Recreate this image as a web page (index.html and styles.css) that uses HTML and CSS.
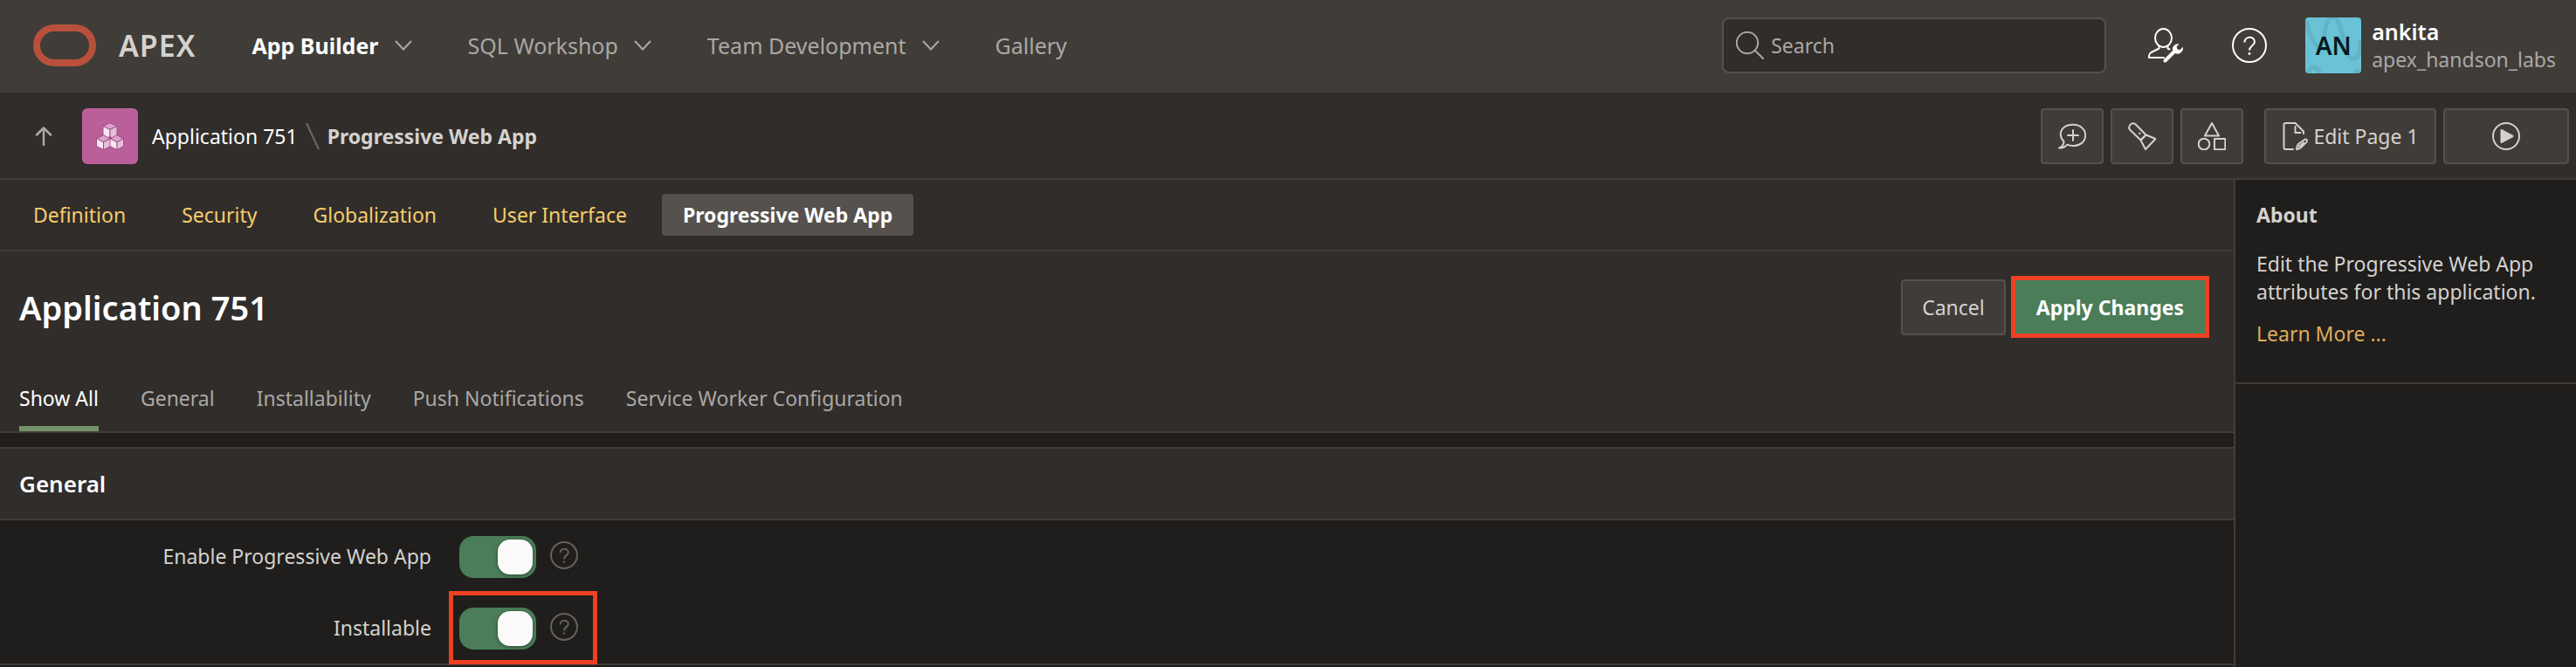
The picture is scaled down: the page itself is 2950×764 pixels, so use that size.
FILE: index.html
```html
<!DOCTYPE html>
<html lang="en">
<head>
<meta charset="utf-8">
<title>Application 751 - Progressive Web App</title>
<link rel="stylesheet" href="styles.css">
</head>
<body>
<header class="topbar">
  <a class="brand" href="#" aria-label="APEX home">
    <svg class="brand-mark" width="72" height="48" viewBox="0 0 72 48" aria-hidden="true"><rect x="4" y="4" width="64" height="40" rx="20" fill="none" stroke="#b9503c" stroke-width="8"/></svg>
    <span class="brand-name">APEX</span>
  </a>
  <nav class="mainnav" aria-label="Main">
    <a class="mainnav-link is-current" href="#">App Builder <svg class="chevron" viewBox="0 0 20 12" aria-hidden="true"><path d="M1 1l9 9.500 9-9.500"/></svg></a>
    <a class="mainnav-link" href="#">SQL Workshop <svg class="chevron" viewBox="0 0 20 12" aria-hidden="true"><path d="M1 1l9 9.500 9-9.500"/></svg></a>
    <a class="mainnav-link" href="#">Team Development <svg class="chevron" viewBox="0 0 20 12" aria-hidden="true"><path d="M1 1l9 9.500 9-9.500"/></svg></a>
    <a class="mainnav-link" href="#">Gallery</a>
  </nav>
  <label class="search">
    <svg class="search-icon" width="32" height="32" viewBox="0 0 32 32" aria-hidden="true"><circle cx="13" cy="13" r="12.200"/><path d="M22 22l9.500 9.500"/></svg>
    <input class="search-input" type="search" placeholder="Search" aria-label="Search">
  </label>
  <button class="icon-button admin" type="button" aria-label="Administration">
    <svg width="40" height="40" viewBox="0 0 40 40" fill="none" stroke="#fff" stroke-width="2" stroke-linejoin="round" stroke-linecap="round" aria-hidden="true"><ellipse cx="17.500" cy="11.500" rx="9.500" ry="10.500"/><path d="M12.500 20.500v3L3.500 28C1.800 29 1 30.300 1 32v2h17M22.500 20.500v3l2 1"/><path d="M19.500 37.500L31 26" stroke-width="4"/><path d="M34.500 18.500c-4 .3-7 3-6 7 .8 4 6.500 5 9.200 2.200 1.500-1.600 2-3.200 1.800-5.200l-3 3-3.300-.7-.8-3z" fill="#fff" stroke-width=".8"/></svg>
  </button>
  <button class="icon-button help" type="button" aria-label="Help">
    <svg width="40" height="40" viewBox="0 0 40 40" fill="none" stroke="#fff" stroke-width="2" aria-hidden="true"><circle cx="20" cy="20" r="19"/><path d="M14.500 16.500c0-7.500 11.500-7.500 11.500-.5 0 4-6 4.500-6 9.500"/><circle cx="20" cy="29.500" r="1.400" fill="#fff" stroke="none"/></svg>
  </button>
  <a class="account" href="#">
    <span class="avatar">
      <svg class="avatar-art" viewBox="0 0 64 64" aria-hidden="true"><path d="M1 4c5 18 6 22 15 32 8-4 4-36 16-37 13 4 9 46 22 48 8 0 9-8 9-21M4 63c2-8 8-9 13 1M56 63q3 0 4-4"/></svg>
      <span class="avatar-initials">AN</span>
    </span>
    <span class="account-text"><strong class="account-user">ankita</strong><span class="account-space">apex_handson_labs</span></span>
  </a>
</header>

<div class="crumbbar">
  <a class="up" href="#" aria-label="Up"><svg width="20" height="22" viewBox="0 0 20 22" fill="none" stroke="#aaa8a5" stroke-width="2.500" stroke-linecap="round" stroke-linejoin="round" aria-hidden="true"><path d="M10 21V2M2 9.500L10 1.500l8 8"/></svg></a>
  <span class="app-tile">
    <svg width="32" height="32" viewBox="0 0 32 32" stroke="#8f3f78" stroke-width=".8" stroke-linejoin="round" aria-hidden="true">
      <path d="M8 4.500L16 .8l8 3.700-8 4z" fill="#dda3cb"/><path d="M8 4.500l8 4v8l-8 4z" fill="#f8e6f2"/><path d="M24 4.500l-8 4v8l8 4z" fill="#e8bedb"/>
      <path d="M.5 18.800l8-4 8 4-8 4z" fill="#dda3cb"/><path d="M.5 18.800l8 4v8.700l-8-4z" fill="#f8e6f2"/><path d="M16.500 18.800l-8 4v8.700l8-4z" fill="#e8bedb"/>
      <path d="M16 18.800l8-4 7.500 4-7.500 4z" fill="#dda3cb"/><path d="M16 18.800l8 4v8.700l-8-4z" fill="#f8e6f2"/><path d="M31.500 18.800l-7.500 4v8.700l7.500-4z" fill="#e8bedb"/>
    </svg>
  </span>
  <nav class="crumbs" aria-label="Breadcrumb">
    <a class="crumb" href="#">Application 751</a>
    <svg class="crumb-slash" width="16" height="32" viewBox="0 0 16 32" aria-hidden="true"><path d="M1 1l14 30"/></svg>
    <span class="crumb is-current">Progressive Web App</span>
  </nav>
  <div class="tools">
    <button class="tool" type="button" aria-label="Feedback"><svg class="glyph" viewBox="0 0 32 32" aria-hidden="true"><path d="M1 29.500c3.500-1.500 5.500-4 5.500-7.500C4 19.500 2.800 17 2.800 14 2.800 7 8.800 2.800 17 2.800S31.200 8 31.200 15 25.500 27 17 27c-2.500 0-4.800-.4-6.500-1.300C8.500 28 5 29.800 1 29.500z"/><path d="M17 9v12M11 15h12"/></svg></button>
    <button class="tool" type="button" aria-label="Find"><svg class="glyph" viewBox="0 0 32 32" aria-hidden="true"><path d="M2 8.500C-.5 5 4-1 8.500 2.200L20.500 14.500 14.500 20.500z"/><path d="M20.500 14.500l11 4.500L20 31l-5.500-10.500z"/><path d="M13 12.500l.6.600"/></svg></button>
    <button class="tool" type="button" aria-label="Shared components"><svg class="glyph" viewBox="0 0 32 32" aria-hidden="true"><path d="M16 1l8 14.500H8z"/><circle cx="7" cy="25" r="6.300"/><rect x="19" y="19" width="12.300" height="12.300"/></svg></button>
    <button class="tool tool-edit" type="button"><svg class="glyph" viewBox="0 0 32 32" aria-hidden="true"><path d="M13 31H4.500q-2 0-2-2V3q0-2 2-2h11L25 10.500V13M15.500 5v7h6M17 31c.3-3 .8-4.800 2.300-6.300L26 20c2-1.500 4 .8 2.500 2.600L22 29c-1.500 1.300-3 2-5 2zM20 27.800l5-4.300"/></svg>Edit Page 1</button>
    <button class="tool tool-run" type="button" aria-label="Run page"><svg class="glyph" viewBox="0 0 32 32" aria-hidden="true"><circle cx="16" cy="16" r="15"/><path d="M10.500 9l13 7-13 7z" fill="#d4d2cf"/></svg></button>
  </div>
</div>

<div class="workspace">
  <main class="main">
    <nav class="subnav" aria-label="Application attributes">
      <a class="subnav-link" href="#">Definition</a>
      <a class="subnav-link" href="#">Security</a>
      <a class="subnav-link" href="#">Globalization</a>
      <a class="subnav-link" href="#">User Interface</a>
      <a class="subnav-link is-current" href="#" aria-current="page">Progressive Web App</a>
    </nav>
    <section class="pagehead">
      <div class="titlebar">
        <h1 class="title">Application 751</h1>
        <button class="button" type="button">Cancel</button>
        <button class="button button-hot" type="button">Apply Changes</button>
      </div>
      <nav class="tabs" aria-label="Sections">
        <a class="tab is-current" href="#">Show All</a>
        <a class="tab" href="#">General</a>
        <a class="tab" href="#">Installability</a>
        <a class="tab" href="#">Push Notifications</a>
        <a class="tab" href="#">Service Worker Configuration</a>
      </nav>
    </section>
    <section class="region">
      <h2 class="region-title">General</h2>
      <div class="field">
        <label class="field-label" for="enable">Enable Progressive Web App</label>
        <div class="field-control">
          <input class="switch" id="enable" type="checkbox" role="switch" checked>
          <button class="field-help" type="button" aria-label="Help for Enable Progressive Web App"><svg width="32" height="32" viewBox="0 0 40 40" fill="none" stroke="#65625f" stroke-width="2.500" aria-hidden="true"><circle cx="20" cy="20" r="18.700"/><path d="M14.500 16.500c0-7.500 11.500-7.500 11.500-.5 0 4-6 4.500-6 9.500"/><path d="M20 28v3"/></svg></button>
        </div>
      </div>
      <div class="field">
        <label class="field-label" for="installable">Installable</label>
        <div class="field-control is-marked">
          <input class="switch" id="installable" type="checkbox" role="switch" checked>
          <button class="field-help" type="button" aria-label="Help for Installable"><svg width="32" height="32" viewBox="0 0 40 40" fill="none" stroke="#65625f" stroke-width="2.500" aria-hidden="true"><circle cx="20" cy="20" r="18.700"/><path d="M14.500 16.500c0-7.500 11.500-7.500 11.500-.5 0 4-6 4.500-6 9.500"/><path d="M20 28v3"/></svg></button>
        </div>
      </div>
    </section>
  </main>
  <aside class="side">
    <section class="about">
      <h2 class="about-title">About</h2>
      <p class="about-text">Edit the Progressive Web App attributes for this application.</p>
      <a class="about-link" href="#">Learn More ...</a>
    </section>
  </aside>
</div>
</body>
</html>
```
FILE: styles.css
```css
* { box-sizing: border-box; }
:root {
  --bar: #403c38;
  --panel: #312d2a;
  --page: #201e1c;
  --line: #403c38;
  --edge: #56514d;
  --soft: #aaa8a5;
  --text: #d4d2cf;
  --green: #4a7d58;
  --mark: #ee4023;
}
body {
  margin: 0;
  min-height: 100vh;
  display: flex;
  flex-direction: column;
  background: var(--page);
  color: var(--text);
  font: 23px/32px "Noto Sans", "Open Sans", sans-serif;
}
a { color: inherit; text-decoration: none; }
button { font: inherit; color: inherit; cursor: pointer; }
h1, h2, p { margin: 0; }
svg { display: block; flex: none; }

.topbar {
  display: flex;
  align-items: center;
  padding: 20px 23px 22px 38px;
  background: var(--bar);
}
.brand { display: flex; align-items: center; gap: 26px; }
.brand-name { font-size: 34px; font-weight: 600; letter-spacing: 1px; }
.mainnav { display: flex; gap: 64px; margin-left: 64px; color: var(--soft); font-size: 25px; }
.mainnav-link { display: flex; align-items: center; gap: 18px; white-space: nowrap; }
.mainnav-link.is-current { color: #fff; font-weight: 700; }
.chevron { width: 20px; height: 12px; fill: none; stroke: var(--soft); stroke-width: 2; }
.search {
  display: flex;
  align-items: center;
  gap: 8px;
  width: 440px;
  height: 64px;
  margin-left: auto;
  padding: 0 14px;
  border: 2px solid var(--edge);
  border-radius: 8px;
  background: var(--panel);
}
.search-icon { fill: none; stroke: var(--soft); stroke-width: 2; stroke-linecap: round; }
.search-input {
  flex: 1;
  min-width: 0;
  padding: 0;
  border: 0;
  outline: 0;
  background: none;
  color: #fff;
  font: inherit;
}
.search-input::placeholder { color: var(--soft); opacity: 1; }
.icon-button { padding: 0; border: 0; background: none; }
.admin { margin-left: 48px; }
.help { margin-left: 56px; }
.account { display: flex; align-items: center; gap: 12px; margin-left: 44px; }
.avatar {
  position: relative;
  display: grid;
  place-items: center;
  width: 64px;
  height: 64px;
  border-radius: 4px;
  background: #6ac2d6;
  color: #06191d;
  font-size: 28px;
  font-weight: 600;
  overflow: hidden;
}
.avatar-art { position: absolute; inset: 0; fill: none; stroke: #60b4c7; stroke-width: 5; }
.avatar-initials { position: relative; }
.account-text { display: flex; flex-direction: column; }
.account-user { color: #fff; font-size: 25px; font-weight: 600; }
.account-space { color: var(--soft); }

.crumbbar {
  display: flex;
  align-items: center;
  padding: 18px 8px 16px 40px;
  border-bottom: 2px solid var(--line);
  background: var(--panel);
}
.app-tile {
  display: grid;
  place-items: center;
  width: 64px;
  height: 64px;
  margin-left: 34px;
  border-radius: 6px;
  background: #bb5f9b;
}
.crumbs { display: flex; align-items: center; gap: 9px; margin-left: 16px; white-space: nowrap; }
.crumb { color: #fff; }
.crumb.is-current { color: var(--text); font-weight: 700; }
.crumb-slash { fill: none; stroke: #6e6a66; stroke-width: 2; }
.tools { display: flex; gap: 8px; margin-left: auto; }
.tool {
  display: flex;
  align-items: center;
  justify-content: center;
  gap: 4px;
  min-width: 72px;
  height: 64px;
  padding: 0 18px;
  border: 2px solid var(--edge);
  border-radius: 4px;
  background: var(--bar);
  white-space: nowrap;
}
.tool-edit { min-width: 197px; margin-left: 16px; }
.tool-run { min-width: 144px; }
.glyph { width: 32px; height: 32px; fill: none; stroke: var(--text); stroke-width: 2; stroke-linejoin: round; stroke-linecap: round; }

.workspace { flex: 1; display: flex; }
.main { flex: 1; min-width: 0; }
.subnav {
  display: flex;
  gap: 16px;
  padding: 16px 14px;
  border-bottom: 2px solid var(--line);
  background: var(--panel);
  color: #f5cd6c;
}
.subnav-link { padding: 8px 24px; border-radius: 4px; white-space: nowrap; }
.subnav-link.is-current { background: #56514c; color: #fff; font-weight: 700; }

.pagehead { padding: 32px 30px 0 22px; border-bottom: 2px solid var(--line); background: var(--panel); }
.titlebar { display: flex; align-items: center; gap: 8px; }
.title { flex: 1; color: #fff; font-size: 38px; line-height: 64px; font-weight: 600; }
.button {
  position: relative;
  height: 64px;
  padding: 0 22px;
  border: 2px solid var(--edge);
  border-radius: 4px;
  background: var(--bar);
  white-space: nowrap;
}
.button-hot { padding: 0 25px; border-color: var(--green); background: var(--green); color: #fff; font-weight: 700; }
.button-hot::after { content: ""; position: absolute; inset: -6px -4px -5px; border: 5px solid var(--mark); }
.tabs { display: flex; gap: 48px; margin-top: 56px; color: var(--soft); white-space: nowrap; }
.tab { padding: 0 0 16px; border-bottom: 6px solid transparent; }
.tab.is-current { color: #fff; border-color: #73936b; }

.region { margin-top: 16px; border-top: 2px solid var(--line); border-bottom: 2px solid var(--line); }
.region-title {
  padding: 24px 22px;
  border-bottom: 2px solid var(--line);
  background: var(--panel);
  color: #fff;
  font-size: 26px;
  font-weight: 600;
}
.field { display: grid; grid-template-columns: 494px 1fr; align-items: center; gap: 20px; }
.field-label { text-align: right; }
.field-control {
  position: relative;
  justify-self: start;
  display: flex;
  align-items: center;
  gap: 16px;
  padding: 18px 22px 16px 12px;
}
.is-marked::after { content: ""; position: absolute; inset: -1px 0; border: 5px solid var(--mark); pointer-events: none; }
.switch {
  appearance: none;
  display: flex;
  justify-content: flex-end;
  align-items: center;
  width: 88px;
  height: 48px;
  margin: 0;
  padding: 4px;
  border-radius: 16px;
  background: var(--green);
}
.switch::before { content: ""; width: 40px; height: 40px; border-radius: 14px; background: #fcfbfa; box-shadow: 0 1px 4px rgba(0, 0, 0, .4); }
.switch:not(:checked) { justify-content: flex-start; background: var(--edge); }
.field-help { padding: 0 0 4px; border: 0; background: none; }

.side { flex: 0 0 392px; border-left: 2px solid var(--line); }
.about { padding: 24px 24px 40px; border-bottom: 2px solid var(--line); }
.about-title { font-size: 23px; font-weight: 700; }
.about-text { margin: 24px 0 16px; }
.about-link { color: #deac5d; }
```
